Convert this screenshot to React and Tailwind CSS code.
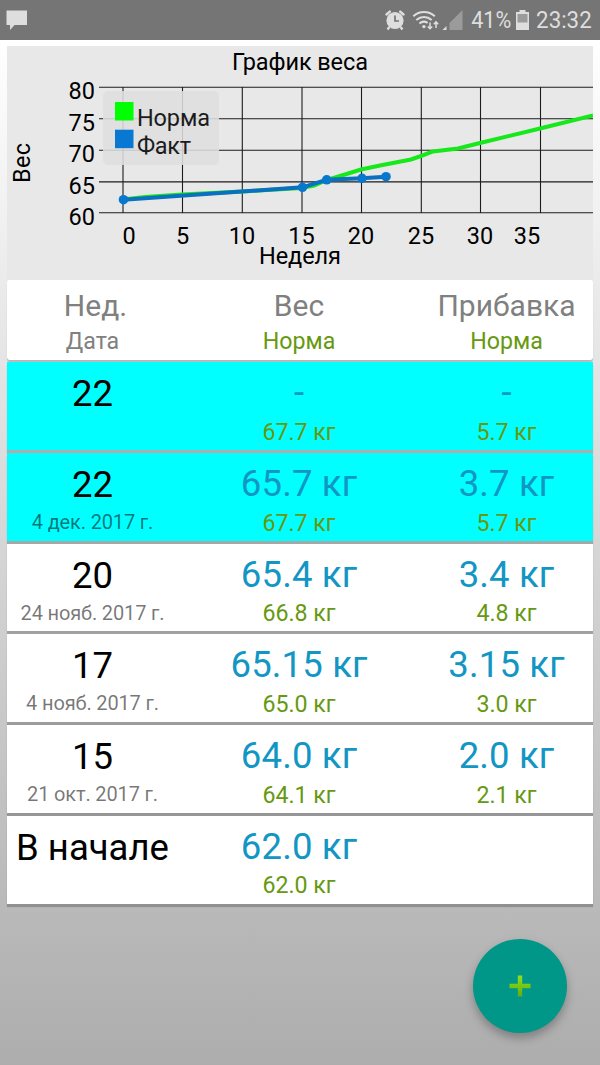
import React from "react";

const gridX = [123, 182.5, 242.3, 302, 361.5, 421.3, 480.5, 540.5];
const gridY = [87.3, 118.7, 150.3, 181.9, 212.7];

const yLabels = [
  { text: "80", y: 99 },
  { text: "75", y: 130.5 },
  { text: "70", y: 162 },
  { text: "65", y: 193.5 },
  { text: "60", y: 225 },
];

const xLabels = [
  { text: "0", x: 129 },
  { text: "5", x: 182.5 },
  { text: "10", x: 242 },
  { text: "15", x: 301.5 },
  { text: "20", x: 361 },
  { text: "25", x: 421 },
  { text: "30", x: 480 },
  { text: "35", x: 527 },
];

const norm =
  "123,199.5 145,197 182,194.5 242,191.5 302,188 314,185.5 327,180 345,174.5 361,169.5 380,165.5 411,159.5 421,156 433,151.5 458,148.5 480,143 540,128.5 593,115.5";

const fact = [
  [123.5, 199.7],
  [302.5, 187.3],
  [326.7, 179.8],
  [362, 178.3],
  [386, 176.7],
];

const rows = [
  { week: "22", date: "", weight: "-", gain: "-", normWeight: "67.7 кг", normGain: "5.7 кг", active: true },
  { week: "22", date: "4 дек. 2017 г.", weight: "65.7 кг", gain: "3.7 кг", normWeight: "67.7 кг", normGain: "5.7 кг", active: true },
  { week: "20", date: "24 нояб. 2017 г.", weight: "65.4 кг", gain: "3.4 кг", normWeight: "66.8 кг", normGain: "4.8 кг" },
  { week: "17", date: "4 нояб. 2017 г.", weight: "65.15 кг", gain: "3.15 кг", normWeight: "65.0 кг", normGain: "3.0 кг" },
  { week: "15", date: "21 окт. 2017 г.", weight: "64.0 кг", gain: "2.0 кг", normWeight: "64.1 кг", normGain: "2.1 кг" },
  { week: "В начале", date: "", weight: "62.0 кг", gain: "", normWeight: "62.0 кг", normGain: "" },
];

function StatusBar() {
  return (
    <header className="h-10 shrink-0 bg-[#757575] text-[#dedede] flex items-center justify-between pl-1.5 pr-2">
      <svg width="22" height="20" viewBox="0 0 22 20" fill="currentColor">
        <path d="M0.5 0.5h20.5v14.5H8.5L4 20v-5H0.5z" />
      </svg>

      <div className="flex items-center">
        {/* alarm */}
        <svg width="20" height="21" viewBox="0 0 20 21" fill="none">
          <circle cx="10" cy="10.5" r="8.6" fill="currentColor" />
          <path d="M1.5 4.5 4.8 1.6M18.5 4.5 15.2 1.6" stroke="currentColor" strokeWidth="2.4" strokeLinecap="round" />
          <path d="M4.5 17 2.5 19.5M15.5 17l2 2.5" stroke="currentColor" strokeWidth="2.4" />
          <path d="M10 5.5v5.5h4" stroke="#757575" strokeWidth="1.7" />
        </svg>

        {/* wifi with traffic arrows */}
        <svg className="ml-[7px]" width="28" height="21" viewBox="0 0 28 21" fill="none" stroke="currentColor">
          <path d="M1.3 6.2C7.5.6 16.5.6 22.8 6.2" strokeWidth="2" />
          <path d="M4.3 9.9c4.6-4 10.8-4 15.4 0" strokeWidth="2" />
          <path d="M7.4 13.4c2.8-2.3 5.4-2.3 8.2-.6" strokeWidth="2" />
          <circle cx="11.9" cy="16.6" r="1.7" fill="currentColor" stroke="none" />
          <path d="M18 12.5v6M15.8 16.4l2.2 2.3 2.2-2.3M24 18v-6M21.8 14.2l2.2-2.3 2.2 2.3" strokeWidth="1.5" />
        </svg>

        {/* signal */}
        <svg className="ml-0.5" width="21" height="21" viewBox="0 0 21 21">
          <path d="M20.5 0v20H7.5v-7z" fill="#9b9b9b" />
          <path d="M4.5 16v4H0.5z" fill="currentColor" />
        </svg>

        <span className="ml-2 w-10 text-[24px] leading-none whitespace-nowrap flex justify-center">
          <span className="scale-x-[0.9]">41%</span>
        </span>

        {/* battery */}
        <svg className="ml-[5px]" width="13" height="20" viewBox="0 0 13 20" fill="currentColor">
          <path d="M3.5 0h6v2H13v18H0V2h3.5z" />
          <path d="M1.5 4h10v8.5h-10z" fill="#9b9b9b" />
        </svg>

        <span className="ml-[7px] w-14 text-[24px] leading-none flex justify-center">
          <span className="scale-x-[0.93]">23:32</span>
        </span>
      </div>
    </header>
  );
}

function Chart() {
  return (
    <svg className="block bg-[#e8e8e8]" width="586" height="234" viewBox="7 46 586 234" fontSize="23.5">
      <g stroke="#1c1c1c" strokeWidth="1.1">
        {gridX.map((x) => (
          <line key={x} x1={x} x2={x} y1="87" y2="213" />
        ))}
        {gridY.map((y) => (
          <line key={y} x1="99" x2="593" y1={y} y2={y} />
        ))}
      </g>

      <polyline points={norm} fill="none" stroke="#17e81b" strokeWidth="4" />
      <polyline points={fact.join(" ")} fill="none" stroke="#0a70bf" strokeWidth="4" />
      {fact.map(([x, y]) => (
        <circle key={x} cx={x} cy={y} r="4.8" fill="#0878cf" />
      ))}

      {/* legend */}
      <rect x="103" y="91" width="116" height="74" rx="5" fill="#dedede" fillOpacity="0.88" />
      <rect x="115" y="102" width="18.5" height="18.5" fill="#00ff00" />
      <rect x="115" y="129.7" width="18.5" height="18.5" fill="#0878d2" />
      <text x="137" y="125.8" textLength="73" fill="#1c1c1c">Норма</text>
      <text x="137" y="153.5" textLength="54" fill="#1c1c1c">Факт</text>

      <g fill="#000">
        <text x="300" y="70" textAnchor="middle" textLength="136">График веса</text>
        <text x="300" y="263.5" textAnchor="middle" textLength="82">Неделя</text>
        <text transform="translate(30 163) rotate(-90)" textAnchor="middle" textLength="40">Вес</text>
        {yLabels.map((l) => (
          <text key={l.text} x="95" y={l.y} textAnchor="end">{l.text}</text>
        ))}
        {xLabels.map((l) => (
          <text key={l.text} x={l.x} y="244" textAnchor="middle">{l.text}</text>
        ))}
      </g>
    </svg>
  );
}

function HeaderCell({ title, sub, green }) {
  return (
    <div className="flex flex-col items-center text-[#808080] whitespace-nowrap">
      <span className={"mt-2 h-9 text-[30px] leading-9 " + (green ? "" : "pl-1.5")}>{title}</span>
      <span className={"mt-[3px] text-[23.2px] leading-7 " + (green ? "text-[#669911]" : "")}>{sub}</span>
    </div>
  );
}

function ValueCell({ value, norm }) {
  return (
    <div className="flex flex-col items-center whitespace-nowrap">
      <span className="mt-[9px] h-11 text-[36.5px] leading-[44px] tracking-[0.15px] text-[#1296c4]">{value}</span>
      <span className="mt-[2.7px] text-[23.2px] leading-7 text-[#669911]">{norm}</span>
    </div>
  );
}

function Row({ row }) {
  return (
    <div
      className={
        "h-[87.8px] grid grid-cols-[171px_242px_173px] shadow-[0_3px_1px_rgba(0,0,0,0.22)] " +
        (row.active ? "bg-[#00ffff]" : "bg-white")
      }
    >
      <div className="flex flex-col items-center whitespace-nowrap">
        <span className="mt-2.5 h-11 text-[36.5px] leading-[44px] text-black">{row.week}</span>
        <span className="mt-0.5 text-[20px] leading-[26px] tracking-[-0.15px] text-black/54">{row.date}</span>
      </div>
      <ValueCell value={row.weight} norm={row.normWeight} />
      <ValueCell value={row.gain} norm={row.normGain} />
    </div>
  );
}

export default function App() {
  return (
    <div className="relative w-[600px] h-[1065px] overflow-hidden flex flex-col font-[Roboto,sans-serif]">
      <StatusBar />

      <main className="flex-1 px-[7px] pt-1.5 bg-linear-to-b from-white to-[#adadad]">
        <Chart />

        <div className="h-[79.5px] rounded-[3px] bg-white grid grid-cols-[171px_242px_173px] shadow-[0_2px_1px_rgba(0,0,0,0.2)]">
          <HeaderCell title="Нед." sub="Дата" />
          <HeaderCell title="Вес" sub="Норма" green />
          <HeaderCell title="Прибавка" sub="Норма" green />
        </div>

        <div className="mt-[2.8px] flex flex-col gap-[2.9px]">
          {rows.map((row, i) => (
            <Row key={i} row={row} />
          ))}
        </div>
      </main>

      {/* floating add button */}
      <button className="absolute left-[473px] top-[939px] size-[94px] rounded-full bg-[#009688] flex items-center justify-center shadow-[0_5px_10px_rgba(0,0,0,0.28)]">
        <svg width="22" height="22" viewBox="0 0 22 22">
          <defs>
            <linearGradient id="plus" x1="0" y1="0" x2="0" y2="1">
              <stop offset="0" stopColor="#8fe01c" />
              <stop offset="1" stopColor="#5fae10" />
            </linearGradient>
          </defs>
          <path d="M8.8 0.5h4.4v8.3h8.3v4.4h-8.3v8.3H8.8v-8.3H0.5V8.8h8.3z" fill="url(#plus)" />
        </svg>
      </button>
    </div>
  );
}
